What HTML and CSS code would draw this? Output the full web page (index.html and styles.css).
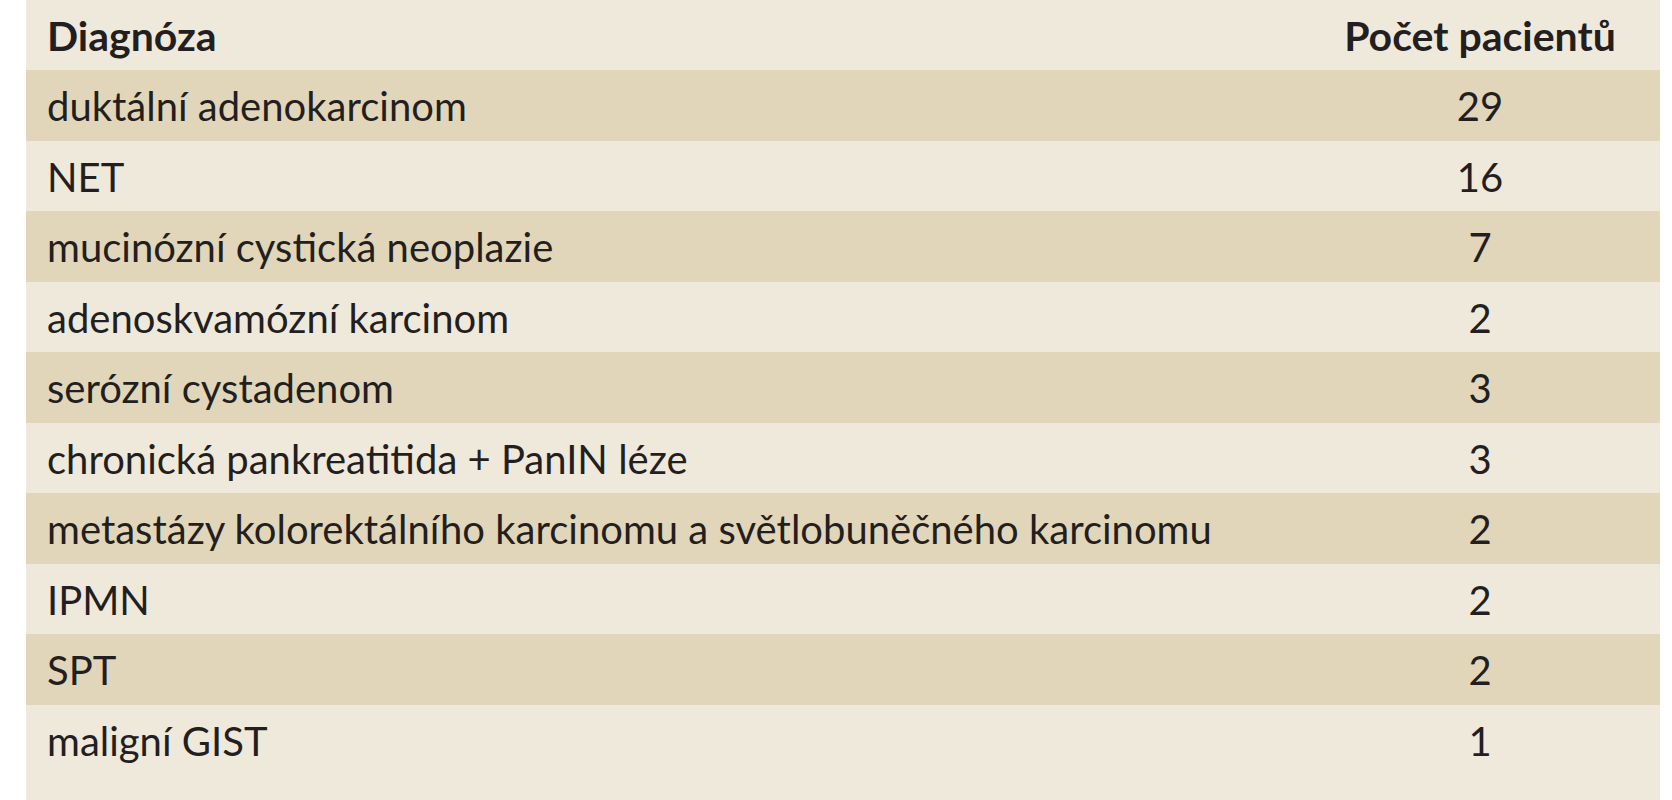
FILE: index.html
```html
<!DOCTYPE html>
<html lang="cs">
<head>
<meta charset="utf-8">
<title>Diagnóza</title>
<link rel="stylesheet" href="styles.css">
</head>
<body>
<div class="panel">
  <div class="row head">
    <div class="name">Diagnóza</div>
    <div class="count">Počet pacientů</div>
  </div>
  <div class="row odd"><div class="name">duktální adenokarcinom</div><div class="count">29</div></div>
  <div class="row"><div class="name">NET</div><div class="count">16</div></div>
  <div class="row odd"><div class="name">mucinózní cystická neoplazie</div><div class="count">7</div></div>
  <div class="row"><div class="name">adenoskvamózní karcinom</div><div class="count">2</div></div>
  <div class="row odd"><div class="name">serózní cystadenom</div><div class="count">3</div></div>
  <div class="row"><div class="name">chronická pankreatitida + PanIN léze</div><div class="count">3</div></div>
  <div class="row odd"><div class="name">metastázy kolorektálního karcinomu a světlobuněčného karcinomu</div><div class="count">2</div></div>
  <div class="row"><div class="name">IPMN</div><div class="count">2</div></div>
  <div class="row odd"><div class="name">SPT</div><div class="count">2</div></div>
  <div class="row"><div class="name">maligní GIST</div><div class="count">1</div></div>
</div>
</body>
</html>
```
FILE: styles.css
```css
html, body {
  margin: 0;
  padding: 0;
  background: #ffffff;
}
body {
  height: 800px;
  overflow: hidden;
  font-family: "Lato", "Open Sans", sans-serif;
  color: #231f20;
}
.panel {
  margin-left: 26px;
  width: 1634px;
  height: 800px;
  background: #efe9dc;
}
.row {
  display: grid;
  grid-template-columns: 1fr 360px;
  height: 70.5px;
  line-height: 72px;
  font-size: 40px;
}
.row.head {
  height: 70px;
  line-height: 72px;
  font-size: 41px;
  font-weight: 700;
}
.row.odd {
  background: #e1d6ba;
}
.name {
  padding-left: 21px;
  white-space: nowrap;
}
.count {
  text-align: center;
}
```
